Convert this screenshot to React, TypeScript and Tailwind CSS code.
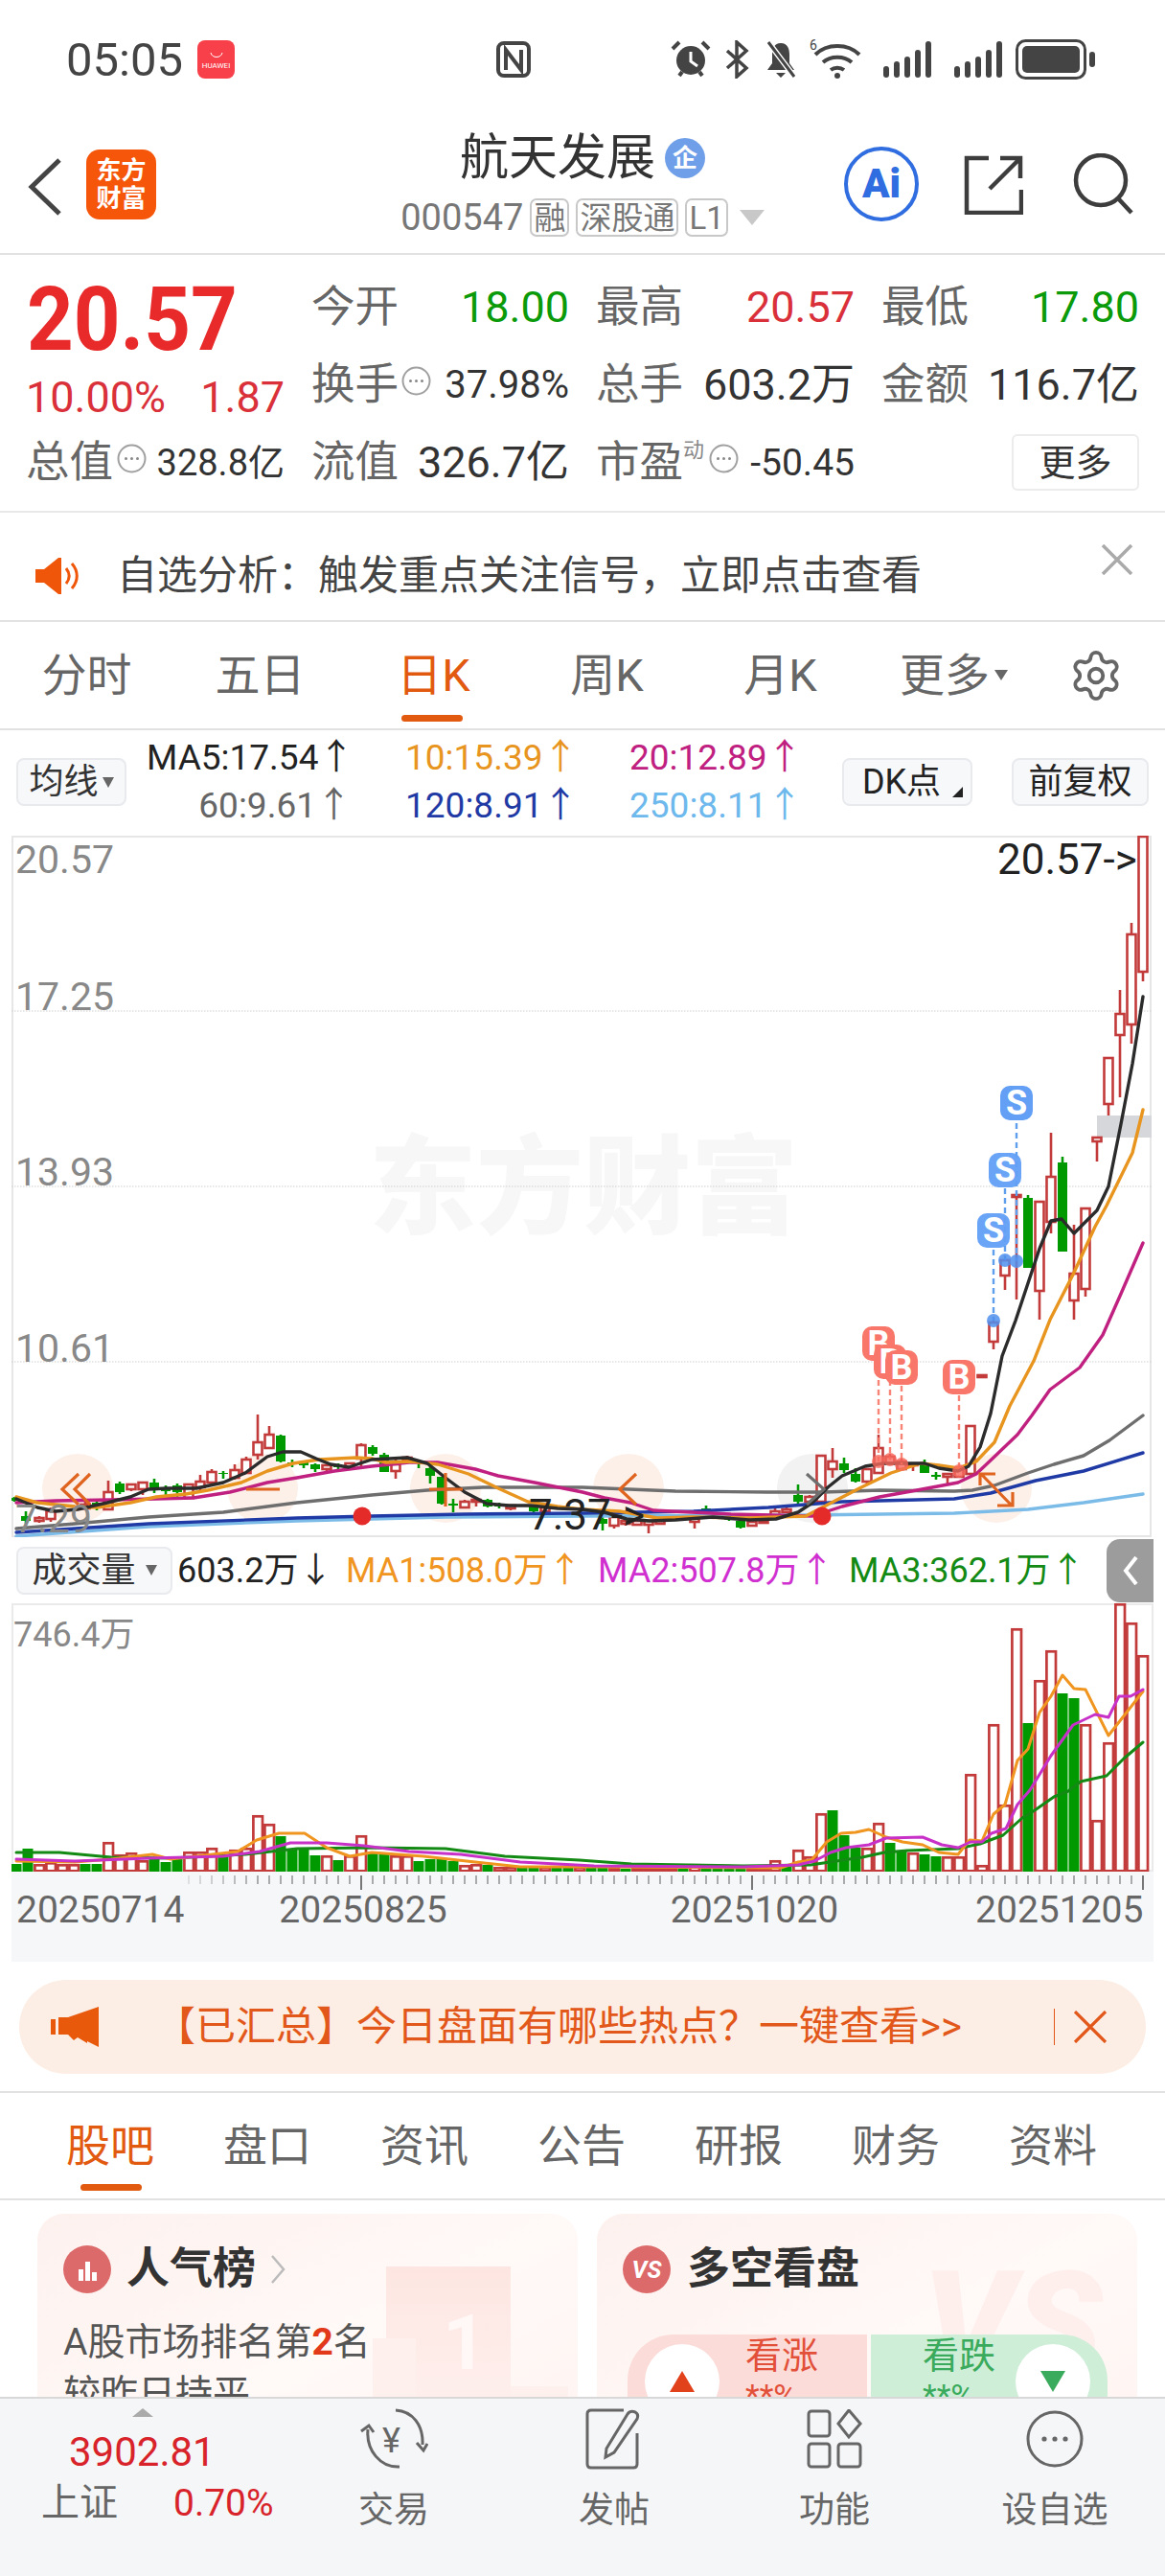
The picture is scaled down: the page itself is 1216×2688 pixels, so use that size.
import React from "react";
import { Settings } from "lucide-react";

type C = [number, number, number, number, number, string];
const candles: C[] = [
  [15,1562,1563,1566,1567,"g"],[27,1577,1582,1587,1590,"g"],[41,1582,1584,1587,1589,"r"],[53,1573,1577,1585,1588,"r"],
  [89,1565,1570,1574,1576,"r"],[101,1566,1568,1574,1576,"g"],[113,1545,1557,1575,1576,"r"],[125,1546,1548,1557,1559,"g"],
  [137,1548,1549,1554,1556,"r"],[149,1546,1547,1554,1560,"r"],[161,1543,1547,1554,1558,"g"],[173,1550,1554,1556,1560,"g"],
  [185,1548,1550,1557,1563,"g"],[197,1549,1549,1563,1563,"r"],[209,1539,1546,1552,1555,"r"],[221,1533,1536,1547,1548,"r"],
  [233,1535,1537,1538,1543,"g"],[245,1528,1534,1542,1544,"r"],[257,1520,1523,1537,1538,"r"],[269,1476,1505,1518,1523,"r"],
  [281,1488,1497,1511,1512,"r"],[293,1497,1498,1525,1526,"g"],[305,1523,1526,1528,1531,"g"],[317,1525,1526,1529,1532,"g"],
  [329,1527,1528,1533,1536,"g"],[341,1528,1529,1533,1536,"r"],[353,1527,1529,1531,1533,"g"],[365,1527,1527,1531,1534,"r"],
  [377,1506,1508,1522,1531,"r"],[389,1508,1510,1517,1519,"g"],[401,1516,1518,1536,1536,"g"],[413,1522,1528,1535,1543,"r"],
  [425,1519,1521,1524,1526,"r"],[437,1524,1525,1527,1532,"g"],[449,1530,1532,1540,1548,"g"],[461,1541,1541,1569,1570,"g"],
  [473,1564,1569,1571,1578,"g"],[485,1565,1567,1573,1574,"r"],[497,1563,1565,1567,1572,"r"],[509,1564,1565,1572,1573,"g"],
  [521,1568,1570,1572,1574,"g"],[533,1570,1571,1574,1576,"r"],[557,1571,1572,1577,1578,"g"],[569,1572,1573,1577,1579,"r"],
  [629,1583,1585,1590,1597,"g"],[641,1582,1583,1592,1595,"r"],[653,1585,1587,1590,1592,"r"],[665,1585,1587,1591,1592,"r"],
  [677,1586,1587,1591,1600,"r"],[689,1585,1587,1590,1591,"r"],[725,1582,1583,1588,1595,"r"],[737,1571,1574,1577,1579,"g"],
  [761,1580,1582,1586,1587,"g"],[773,1585,1587,1594,1595,"g"],[785,1586,1588,1592,1592,"r"],[797,1586,1587,1589,1590,"r"],
  [809,1574,1577,1583,1584,"r"],[821,1573,1575,1578,1579,"r"],[833,1549,1560,1567,1570,"g"],[845,1560,1562,1567,1568,"r"],
  [857,1519,1519,1567,1567,"r"],[869,1511,1525,1533,1542,"r"],[881,1521,1527,1534,1537,"g"],[893,1532,1538,1546,1547,"g"],
  [905,1533,1533,1546,1548,"r"],[917,1497,1511,1537,1538,"r"],[929,1517,1520,1527,1528,"r"],[941,1522,1525,1533,1534,"r"],
  [953,1526,1528,1529,1535,"r"],[965,1523,1529,1537,1537,"g"],[977,1536,1539,1541,1544,"g"],[989,1537,1538,1541,1548,"r"],
  [1001,1532,1533,1541,1541,"r"],[1013,1488,1488,1538,1539,"r"],[1025,1435,1435,1437,1437,"r"],[1037,1378,1380,1400,1408,"r"],
  [1049,1315,1315,1331,1346,"r"],[1061,1247,1247,1249,1356,"r"],[1073,1247,1250,1323,1323,"g"],[1085,1254,1254,1347,1377,"r"],
  [1097,1182,1228,1275,1287,"r"],[1109,1207,1213,1306,1306,"g"],[1121,1278,1329,1357,1377,"r"],[1133,1261,1261,1345,1353,"r"],
  [1145,1187,1187,1191,1212,"r"],[1157,1104,1104,1152,1164,"r"],[1169,1033,1058,1080,1145,"r"],[1181,963,975,1069,1089,"r"],
  [1193,873,873,1014,1024,"r"],
];

const ma5 = "17,1564 39,1573 58,1577 81,1575 112,1568 136,1562 155,1554 174,1553 205,1553 233,1547 256,1537 279,1520 295,1515 314,1515 330,1522 345,1528 364,1531 388,1523 407,1522 425,1521 446,1527 465,1542 485,1557 508,1569 531,1571 554,1571 582,1574 608,1575 631,1578 654,1585 678,1587 705,1586 744,1583 782,1586 810,1585 833,1578 848,1568 864,1552 879,1540 903,1530 922,1527 949,1527 965,1527 980,1532 1000,1535 1011,1530 1023,1510 1034,1475 1046,1415 1060,1378 1085,1303 1097,1274 1108,1272 1121,1287 1145,1263 1157,1238 1170,1173 1182,1110 1193,1040";
const ma10 = "17,1562 39,1568 78,1572 101,1573 136,1568 163,1562 194,1559 217,1555 252,1547 279,1535 306,1527 333,1523 372,1521 388,1522 403,1526 430,1525 457,1528 489,1538 520,1553 551,1567 582,1572 608,1575 647,1577 686,1584 724,1583 782,1584 841,1582 864,1570 899,1552 930,1537 961,1527 980,1529 1000,1532 1019,1525 1038,1505 1054,1467 1079,1420 1096,1377 1120,1330 1143,1280 1155,1258 1182,1203 1193,1158";
const ma20 = "17,1568 58,1566 116,1565 163,1564 202,1563 240,1557 279,1547 310,1542 349,1535 388,1530 427,1526 457,1526 496,1533 520,1540 558,1547 608,1557 631,1563 658,1568 682,1576 701,1577 763,1580 848,1582 879,1572 918,1562 957,1555 1000,1547 1019,1538 1038,1520 1062,1497 1077,1477 1096,1450 1127,1427 1151,1393 1170,1350 1193,1297";
const ma60 = "17,1595 78,1590 155,1583 233,1578 310,1568 388,1560 446,1555 504,1552 608,1552 705,1556 802,1557 860,1557 918,1555 996,1556 1015,1555 1038,1550 1073,1537 1100,1528 1131,1519 1158,1503 1193,1477";
const ma120 = "17,1599 155,1590 310,1584 388,1582 485,1580 608,1579 724,1577 802,1573 879,1567 996,1564 1034,1558 1081,1545 1131,1535 1193,1516";
const ma250 = "17,1603 155,1593 310,1587 465,1583 608,1582 841,1581 996,1579 1073,1575 1131,1568 1193,1559";

const vol: [number, string][] = [
  [8,"g"],[24,"g"],[8,"r"],[10,"r"],[8,"r"],[8,"r"],[8,"g"],[8,"g"],[31,"r"],[18,"r"],[20,"r"],[12,"r"],[15,"g"],[10,"g"],[15,"g"],[21,"r"],[21,"r"],[25,"r"],[17,"g"],[23,"r"],
  [25,"r"],[59,"r"],[50,"r"],[37,"g"],[23,"g"],[24,"g"],[17,"g"],[17,"r"],[12,"g"],[17,"r"],[38,"r"],[20,"g"],[20,"g"],[17,"r"],[17,"r"],[11,"g"],[13,"g"],[13,"g"],[11,"g"],[7,"r"],
  [8,"r"],[7,"g"],[5,"r"],[5,"r"],[5,"g"],[5,"g"],[5,"r"],[4,"g"],[5,"g"],[5,"r"],[5,"g"],[4,"g"],[4,"r"],[3,"g"],[4,"r"],[4,"r"],[4,"r"],[4,"r"],[3,"g"],[8,"r"],
  [7,"g"],[7,"g"],[7,"g"],[5,"g"],[3,"r"],[3,"r"],[12,"r"],[5,"g"],[23,"r"],[16,"r"],[61,"r"],[64,"g"],[38,"g"],[25,"g"],[25,"r"],[51,"r"],[30,"g"],[21,"g"],[20,"r"],[18,"g"],
  [16,"g"],[16,"r"],[16,"r"],[102,"r"],[7,"r"],[154,"r"],[70,"r"],[254,"r"],[155,"g"],[200,"r"],[231,"r"],[186,"g"],[181,"g"],[154,"r"],[54,"r"],[135,"r"],[280,"r"],[260,"r"],[226,"r"],
];
const vm1 = "17,1942 78,1943 116,1940 159,1935 178,1940 248,1932 268,1920 291,1913 318,1913 341,1928 365,1937 388,1933 442,1937 496,1943 543,1948 620,1948 815,1949 833,1943 847,1941 863,1922 878,1913 893,1912 907,1909 925,1917 942,1922 963,1925 980,1933 1000,1935 1012,1920 1025,1921 1037,1893 1049,1883 1062,1837 1073,1825 1085,1787 1097,1770 1109,1748 1121,1762 1133,1763 1157,1811 1193,1765";
const vm2 = "17,1940 78,1942 155,1939 233,1937 271,1932 303,1923 341,1923 380,1926 427,1932 481,1935 543,1943 620,1947 776,1948 833,1946 850,1942 867,1933 883,1928 907,1925 925,1918 963,1917 983,1925 1000,1928 1013,1922 1025,1922 1035,1913 1050,1908 1062,1883 1075,1868 1097,1832 1120,1800 1143,1789 1157,1792 1168,1770 1180,1770 1193,1763";
const vm3 = "17,1933 62,1933 116,1938 178,1939 256,1935 310,1929 388,1928 465,1929 527,1937 605,1941 659,1945 776,1947 846,1946 900,1938 923,1933 947,1931 1000,1929 1023,1924 1047,1915 1067,1897 1080,1889 1100,1875 1115,1869 1128,1859 1155,1853 1173,1835 1193,1818";

const ticks = Array.from({ length: 84 }, (_, i) => 17 + 12 * (i + 15));

function Dots() {
  return (
    <svg width="31" height="31" viewBox="0 0 31 31" className="block shrink-0">
      <circle cx="15.5" cy="15.5" r="14" fill="none" stroke="#a0a0a0" strokeWidth="2" />
      <circle cx="9.5" cy="15.5" r="1.5" fill="#888" />
      <circle cx="15.5" cy="15.5" r="1.5" fill="#888" />
      <circle cx="21.5" cy="15.5" r="1.5" fill="#888" />
    </svg>
  );
}

function Cell({ label, value, color }: { label: string; value: string; color: string }) {
  return (
    <div className="flex items-center justify-between">
      <span className="text-[45.5px] leading-[50px] text-[#666]">{label}</span>
      <span className={`text-[45px] leading-[50px] ${color}`}>{value}</span>
    </div>
  );
}

function Badge({ children, cls }: { children: React.ReactNode; cls: string }) {
  return (
    <span className={`absolute flex h-[36px] w-[34px] items-center justify-center rounded-[10px] text-[36px] leading-none font-bold text-white ${cls}`}>
      {children}
    </span>
  );
}

const F = "#df6420";

function MainChart() {
  return (
    <div className="relative ml-3 h-[732px] w-[1190px] outline-2 -outline-offset-2 outline-[#e6e6e6]">
      <span className="absolute left-[373px] top-[304px] text-[112px] leading-[130px] font-black whitespace-nowrap text-[#f7f7f7]">东方财富</span>
      <svg viewBox="12 872 1190 732" className="absolute inset-0 h-full w-full">
        {[81, 274, 465, 656, 1040].map((x) => (
          <ellipse key={x} cx={x} cy={1553} rx={37} ry={36} fill="#fdf0e9" />
        ))}
        <ellipse cx={848} cy={1553} rx={37} ry={36} fill="#f2f2f2" />
        {[1055, 1238, 1421].map((y) => (
          <line key={y} x1={12} x2={1202} y1={y} y2={y} stroke="#cfcfcf" strokeWidth={1} strokeDasharray="1.5 1.5" />
        ))}
        <rect x={1145} y={1164} width={57} height={23} fill="#d5d7da" />
        {candles.map(([x, hi, top, bot, lo, c]) =>
          c === "r" ? (
            <g key={x} stroke="#c23a3a" strokeWidth={2.6}>
              <line x1={x} x2={x} y1={hi} y2={top} />
              <line x1={x} x2={x} y1={bot} y2={lo} />
              <rect x={x - 4.5} y={top} width={9} height={Math.max(bot - top, 1)} fill="#fff" />
            </g>
          ) : (
            <g key={x} stroke="#009a00">
              <line x1={x} x2={x} y1={hi} y2={lo} strokeWidth={2.6} />
              <rect x={x - 5} y={top} width={10} height={Math.max(bot - top, 1)} fill="#009a00" strokeWidth={0} />
            </g>
          ),
        )}
        <g fill="none" strokeWidth={3.4} strokeLinejoin="round" strokeLinecap="round">
          <polyline points={ma250} stroke="#7bbbe8" />
          <polyline points={ma120} stroke="#1f3aa5" />
          <polyline points={ma60} stroke="#6e6e6e" />
          <polyline points={ma20} stroke="#c0207f" />
          <polyline points={ma10} stroke="#e8951f" />
          <polyline points={ma5} stroke="#2b2b2b" />
        </g>
        <g fill="none" stroke={F} strokeWidth={3.2}>
          <path d="M94 1538 L78 1554 L94 1570 M82 1538 L65 1554 L82 1570" />
          <path d="M257 1554 H292" />
          <path d="M448 1554 H483 M465 1537 V1572" />
          <path d="M664 1538 L647 1554 L664 1570" />
          <path d="M1023 1550 V1538 H1039 M1024 1538 L1056 1571 M1041 1571 H1057 V1557" />
        </g>
        <path d="M842 1538 L860 1554 L842 1570" fill="none" stroke="#6e6e6e" strokeWidth={3.2} />
        <circle cx={378} cy={1582} r={9.5} fill="#e52a2a" />
        <circle cx={858} cy={1582} r={9.5} fill="#e52a2a" />
        <g stroke="#f8776a" strokeWidth={2.4} strokeDasharray="6 4" opacity={0.9}>
          <line x1={917} x2={917} y1={1420} y2={1525} />
          <line x1={929} x2={929} y1={1440} y2={1523} />
          <line x1={941} x2={941} y1={1446} y2={1528} />
          <line x1={1001} x2={1001} y1={1456} y2={1535} />
        </g>
        <g fill="#f8695c" opacity={0.8}>
          <circle cx={917} cy={1525} r={7} />
          <circle cx={929} cy={1523} r={7} />
          <circle cx={941} cy={1528} r={7} />
          <circle cx={1001} cy={1535} r={7} />
        </g>
        <g stroke="#5f9eec" strokeWidth={2.4} strokeDasharray="6 4">
          <line x1={1061} x2={1061} y1={1172} y2={1316} />
          <line x1={1049} x2={1049} y1={1240} y2={1315} />
          <line x1={1037} x2={1037} y1={1304} y2={1378} />
        </g>
        <g fill="#4f90ee" opacity={0.85}>
          <circle cx={1049} cy={1315} r={7} />
          <circle cx={1061} cy={1316} r={7} />
          <circle cx={1037} cy={1378} r={7} />
        </g>
      </svg>
      <span className="absolute left-[4px] top-[0px] text-[41px] leading-[50px] text-[#888]">20.57</span>
      <span className="absolute left-[4px] top-[143px] text-[41px] leading-[50px] text-[#888]">17.25</span>
      <span className="absolute left-[4px] top-[326px] text-[41px] leading-[50px] text-[#888]">13.93</span>
      <span className="absolute left-[4px] top-[510px] text-[41px] leading-[50px] text-[#888]">10.61</span>
      <span className="absolute left-[4px] top-[688px] text-[41px] leading-[50px] text-[#888]">7.29</span>
      <span className="absolute left-[1029px] top-[0px] text-[44px] leading-[50px] whitespace-nowrap text-[#222]">20.57-&gt;</span>
      <span className="absolute left-[540px] top-[684px] text-[44px] leading-[50px] whitespace-nowrap text-[#222]">7.37-&gt;</span>
      <Badge cls="left-[1032px] top-[261px] bg-[#629ff5]">S</Badge>
      <Badge cls="left-[1020px] top-[331px] bg-[#629ff5]/95">S</Badge>
      <Badge cls="left-[1008px] top-[394px] bg-[#629ff5]/95">S</Badge>
      <Badge cls="left-[888px] top-[512px] bg-[#f8776a]">B</Badge>
      <Badge cls="left-[900px] top-[531px] bg-[#f8776a]">B</Badge>
      <Badge cls="left-[912px] top-[537px] bg-[#f8776a]">B</Badge>
      <Badge cls="left-[972px] top-[547px] bg-[#f8776a]">B</Badge>
    </div>
  );
}

function VolChart() {
  return (
    <div className="relative ml-3 h-[280px] w-[1192px] outline-2 -outline-offset-2 outline-[#eaeaea]">
      <svg viewBox="12 1673 1192 280" className="absolute inset-0 h-full w-full">
        {vol.map(([h, c], i) => {
          const x = 17 + 12 * i;
          return c === "r" ? (
            <rect key={i} x={x - 4.6} y={1953 - h + 1.3} width={9.6} height={h - 2} fill="#fff" stroke="#c23a3a" strokeWidth={2.7} />
          ) : (
            <rect key={i} x={x - 5.5} y={1953 - h} width={11} height={h} fill="#009a00" />
          );
        })}
        <g fill="none" strokeWidth={3} strokeLinejoin="round" strokeLinecap="round">
          <polyline points={vm3} stroke="#138a13" />
          <polyline points={vm1} stroke="#f0951f" />
          <polyline points={vm2} stroke="#c831c8" />
        </g>
      </svg>
      <span className="absolute left-[2px] top-[15px] text-[36px] leading-[36px] text-[#888]">746.4万</span>
    </div>
  );
}

function Tag({ children }: { children: React.ReactNode }) {
  return (
    <span className="flex h-[40px] items-center rounded-[7px] border-2 border-[#c8c8c8] px-[2px] text-[33px] leading-none text-[#777]">
      {children}
    </span>
  );
}

function FooterItem({ icon, label }: { icon: React.ReactNode; label: string }) {
  return (
    <div className="flex flex-col items-center">
      <div className="flex h-[64px] items-center justify-center">{icon}</div>
      <span className="mt-[20px] text-[37px] leading-[46px] text-[#666]">{label}</span>
    </div>
  );
}

export default function App() {
  return (
    <div className="flex h-[2688px] w-[1216px] flex-col overflow-hidden bg-white font-[family-name:Roboto,'Noto_Sans_CJK_SC',sans-serif]">
      {/* status bar */}
      <div className="flex h-[124px] shrink-0 items-center">
        <span className="ml-[69px] text-[49px] leading-none text-[#444]">05:05</span>
        <span className="ml-[15px] flex h-[40px] w-[39px] flex-col items-center justify-end rounded-[8px] bg-[#f8404a] pb-[9px] text-[8px] leading-none text-white">
          <svg width="14" height="7" viewBox="0 0 14 7" className="mb-[4px]"><path d="M1 1c1 6 11 6 12 0" fill="none" stroke="#fff" strokeWidth="1" /></svg>
          HUAWEI
        </span>
        <svg width="36" height="38" viewBox="0 0 36 38" className="ml-[273px]" fill="none" stroke="#444" strokeWidth="4">
          <rect x="2" y="2" width="32" height="34" rx="6" />
          <path d="M10 30V9l16 21V9" />
        </svg>
        <svg width="42" height="40" viewBox="0 0 42 40" className="ml-[146px]">
          <circle cx="21" cy="21" r="15" fill="#444" />
          <path d="M21 12v10l7 5" fill="none" stroke="#fff" strokeWidth="3" />
          <path d="M2 9l7-7M40 9l-7-7M9 37l3-4M33 37l-3-4" stroke="#444" strokeWidth="4" />
        </svg>
        <svg width="27" height="40" viewBox="0 0 27 40" className="ml-[14px]" fill="none" stroke="#444" strokeWidth="3.5">
          <path d="M3 11l20 18-10 9V2l10 9L3 29" />
        </svg>
        <svg width="32" height="40" viewBox="0 0 32 40" className="ml-[16px]">
          <path d="M16 3c7 0 9 6 9 12v9l5 7H2l5-7v-9c0-6 2-12 9-12zM11 34h10l-5 5z" fill="#444" />
          <path d="M3 2l27 36" stroke="#fff" strokeWidth="6" />
          <path d="M3 2l27 36" stroke="#444" strokeWidth="3" />
        </svg>
        <svg width="56" height="42" viewBox="0 0 56 42" className="ml-[14px]" fill="none" stroke="#444" strokeWidth="4">
          <path d="M6 16c12-12 34-12 46 0M14 24c8-7 22-7 30 0M22 32c4-3 10-3 14 0" />
          <circle cx="29" cy="38" r="3" fill="#444" stroke="none" />
          <text x="0" y="11" fontSize="14" fill="#444" stroke="none">6</text>
        </svg>
        <svg width="50" height="38" viewBox="0 0 50 38" className="ml-[21px]" fill="#444">
          <rect x="0" y="26" width="6" height="12" rx="3" /><rect x="11" y="21" width="6" height="17" rx="3" /><rect x="22" y="16" width="6" height="22" rx="3" /><rect x="33" y="9" width="6" height="29" rx="3" /><rect x="44" y="0" width="6" height="38" rx="3" />
        </svg>
        <svg width="50" height="38" viewBox="0 0 50 38" className="ml-[24px]" fill="#444">
          <rect x="0" y="26" width="6" height="12" rx="3" /><rect x="11" y="21" width="6" height="17" rx="3" /><rect x="22" y="16" width="6" height="22" rx="3" /><rect x="33" y="9" width="6" height="29" rx="3" /><rect x="44" y="0" width="6" height="38" rx="3" />
        </svg>
        <svg width="84" height="42" viewBox="0 0 84 42" className="ml-[14px]">
          <rect x="1.5" y="1.5" width="71" height="39" rx="9" fill="none" stroke="#444" strokeWidth="3" />
          <rect x="7" y="7" width="60" height="28" rx="5" fill="#444" />
          <rect x="77" y="13" width="6" height="16" rx="3" fill="#444" />
        </svg>
      </div>

      {/* header */}
      <div className="grid h-[142px] shrink-0 grid-cols-[1fr_auto_1fr] border-b-2 border-[#e2e2e2]">
        <div className="flex items-start pt-[32px]">
          <svg width="36" height="60" viewBox="0 0 36 60" className="ml-[29px] mt-[9px]" fill="none" stroke="#444" strokeWidth="5">
            <path d="M33 2L4 30l29 28" />
          </svg>
          <div className="ml-[25px] flex h-[73px] w-[73px] flex-col items-center justify-center rounded-[14px] bg-[#f5560a] text-[26px] leading-[29px] font-bold text-white">
            <span>东方</span>
            <span>财富</span>
          </div>
        </div>
        <div className="flex flex-col items-center pt-[15px]">
          <div className="flex items-center gap-[10px]">
            <span className="text-[51px] leading-[52px] text-[#333]">航天发展</span>
            <span className="flex h-[42px] w-[42px] items-center justify-center rounded-full bg-[#6f9fe8] text-[26px] leading-none font-bold text-white">企</span>
          </div>
          <div className="mt-[16px] flex items-center gap-[7px]">
            <span className="text-[38px] leading-[40px] text-[#777]">000547</span>
            <Tag>融</Tag>
            <Tag>深股通</Tag>
            <Tag>L1</Tag>
            <span className="ml-[5px] h-0 w-0 border-x-[13px] border-t-[16px] border-x-transparent border-t-[#c8c8c8]" />
          </div>
        </div>
        <div className="flex items-start justify-end pr-[32px] pt-[29px]">
          <span className="relative flex h-[78px] w-[78px] items-center justify-center rounded-full border-4 border-[#2f6de0] text-[42px] leading-none font-black text-[#2f6de0]">Ai</span>
          <svg width="62" height="62" viewBox="0 0 62 62" className="ml-[47px] mt-[9px]" fill="none" stroke="#3d3d3d" strokeWidth="4.5">
            <path d="M26 3H3v57h57V36" />
            <path d="M27 35L59 3M38 3h21v21" />
          </svg>
          <svg width="64" height="64" viewBox="0 0 64 64" className="ml-[52px] mt-[7px]" fill="none" stroke="#3d3d3d" strokeWidth="4.5">
            <circle cx="29" cy="28" r="26" />
            <path d="M47 47l14 15" />
          </svg>
        </div>
      </div>

      {/* quote */}
      <div className="grid h-[269px] shrink-0 grid-cols-[270px_269px_270px_269px] grid-rows-[81px_81px_81px] gap-x-[28px] border-b-2 border-[#e8e8e8] pl-[27px] pt-[14px]">
        <div className="row-span-2 flex flex-col">
          <span className="mt-[8px] ml-[1px] origin-center scale-y-[1.08] text-[85px] leading-[92px] font-bold text-[#e82a2a]">20.57</span>
          <div className="mt-[15px] flex items-center justify-between">
            <span className="text-[45px] leading-[40px] text-[#d9303a]">10.00%</span>
            <span className="text-[45px] leading-[40px] text-[#d9303a]">1.87</span>
          </div>
        </div>
        <Cell label="今开" value="18.00" color="text-[#0a9a0a]" />
        <Cell label="最高" value="20.57" color="text-[#d9303a]" />
        <Cell label="最低" value="17.80" color="text-[#0a9a0a]" />
        <div className="flex items-center">
          <span className="text-[45.5px] leading-[50px] text-[#666]">换手</span>
          <span className="mb-[8px] ml-[3px]"><Dots /></span>
          <span className="ml-auto text-[40px] leading-[50px] text-[#333]">37.98%</span>
        </div>
        <Cell label="总手" value="603.2万" color="text-[#333]" />
        <Cell label="金额" value="116.7亿" color="text-[#333]" />
        <div className="flex items-center">
          <span className="text-[45.5px] leading-[50px] text-[#666]">总值</span>
          <span className="mb-[8px] ml-[4px]"><Dots /></span>
          <span className="ml-auto text-[38px] leading-[50px] text-[#333]">328.8亿</span>
        </div>
        <Cell label="流值" value="326.7亿" color="text-[#333]" />
        <div className="flex items-center">
          <span className="text-[45.5px] leading-[50px] text-[#666]">市盈</span>
          <span className="mb-[26px] text-[22px] leading-none text-[#888]">动</span>
          <span className="ml-[5px] mb-[8px]"><Dots /></span>
          <span className="ml-auto text-[39px] leading-[50px] text-[#333]">-50.45</span>
        </div>
        <div className="flex items-center justify-end">
          <span className="flex h-[59px] w-[133px] items-center justify-center rounded-[6px] border-2 border-[#ececec] text-[38px] leading-none text-[#333]">更多</span>
        </div>
      </div>

      {/* alert */}
      <div className="flex h-[114px] shrink-0 items-center border-b-2 border-[#e2e2e2] pt-[19px]">
        <svg width="50" height="38" viewBox="0 0 50 38" className="ml-[37px]">
          <path d="M0 12h9L24 0h3v38h-3L9 26H0z" fill="#f0560a" />
          <path d="M32 11c4 5 4 11 0 16M38 6c7 8 7 18 0 26" fill="none" stroke="#f0560a" strokeWidth="3" />
        </svg>
        <span className="ml-[35px] text-[42px] leading-[50px] whitespace-nowrap text-[#444]">自选分析：触发重点关注信号，立即点击查看</span>
        <svg width="34" height="32" viewBox="0 0 34 32" className="ml-auto mr-[33px] mb-[34px]" fill="none" stroke="#aaa" strokeWidth="3.5">
          <path d="M2 1l30 30M32 1L2 31" />
        </svg>
      </div>

      {/* period tabs */}
      <div className="grid h-[113px] shrink-0 grid-cols-[181px_181px_181px_181px_181px_181px_1fr] items-center border-b-2 border-[#e2e2e2] text-[47px] leading-[50px] text-[#666]">
        <span className="text-center">分时</span>
        <span className="text-center">五日</span>
        <span className="relative text-center text-[#e25a10]">
          日K
          <span className="absolute bottom-[-23px] left-[57px] h-[7px] w-[64px] rounded-full bg-[#e25a10]" />
        </span>
        <span className="text-center">周K</span>
        <span className="text-center">月K</span>
        <span className="flex items-center justify-center">
          更多
          <span className="ml-[5px] h-0 w-0 border-x-[7px] border-t-[11px] border-x-transparent border-t-[#666]" />
        </span>
        <div className="flex justify-center pr-[14px]">
          <Settings size={58} strokeWidth={1.6} color="#666" />
        </div>
      </div>

      {/* MA row */}
      <div className="flex h-[110px] shrink-0 items-center pb-[2px]">
        <span className="ml-[17px] flex h-[50px] w-[115px] items-center justify-center rounded-[8px] border-2 border-[#e8eaee] bg-[#f7f8fa] text-[36px] leading-none text-[#333]">
          均线
          <span className="ml-[4px] h-0 w-0 border-x-[6px] border-t-[11px] border-x-transparent border-t-[#666]" />
        </span>
        <div className="ml-[21px] grid grid-cols-[214px_228px_234px] grid-rows-[50px_50px] items-center text-[37px] leading-[44px] whitespace-nowrap">
          <span className="text-right text-[#222]">MA5:17.54↑</span>
          <span className="pl-[56px] text-[#e8951f]">10:15.39↑</span>
          <span className="pl-[62px] text-[#c0207f]">20:12.89↑</span>
          <span className="text-right text-[#666]">60:9.61↑</span>
          <span className="pl-[56px] text-[#1f3aa5]">120:8.91↑</span>
          <span className="pl-[62px] text-[#6db8ec]">250:8.11↑</span>
        </div>
        <span className="relative ml-[50px] flex h-[50px] w-[136px] items-center justify-center rounded-[8px] border-2 border-[#e8eaee] bg-[#f7f8fa] pr-[12px] text-[36px] leading-none text-[#222]">
          DK点
          <span className="absolute bottom-[7px] right-[8px] h-0 w-0 border-b-[11px] border-l-[11px] border-b-[#222] border-l-transparent" />
        </span>
        <span className="ml-[41px] flex h-[50px] w-[143px] items-center justify-center rounded-[8px] border-2 border-[#e8eaee] bg-[#f7f8fa] text-[36px] leading-none text-[#222]">前复权</span>
      </div>

      <div className="h-[732px] shrink-0"><MainChart /></div>

      {/* volume header */}
      <div className="relative flex h-[69px] shrink-0 items-center whitespace-nowrap pl-[17px] text-[36px] leading-[44px]">
        <span className="flex h-[50px] w-[163px] items-center justify-center rounded-[8px] border-2 border-[#e8eaee] bg-[#f7f8fa] text-[#333]">
          成交量
          <span className="ml-[10px] h-0 w-0 border-x-[6px] border-t-[11px] border-x-transparent border-t-[#666]" />
        </span>
        <span className="ml-[5px] w-[176px] text-[#222]">603.2万↓</span>
        <span className="w-[263px] text-[#f0951f]">MA1:508.0万↑</span>
        <span className="w-[262px] text-[#d030d0]">MA2:507.8万↑</span>
        <span className="text-[#138a13]">MA3:362.1万↑</span>
        <span className="absolute right-[12px] top-[2px] flex h-[66px] w-[49px] items-center justify-center rounded-l-[14px] bg-[#9c9c9c]">
          <svg width="16" height="30" viewBox="0 0 16 30" fill="none" stroke="#fff" strokeWidth="4"><path d="M14 1L3 15l11 14" /></svg>
        </span>
      </div>

      <div className="h-[280px] shrink-0"><VolChart /></div>

      {/* dates */}
      <div className="ml-3 h-[94px] w-[1192px] shrink-0 bg-[#f6f7f9]">
        <svg viewBox="12 1953 1192 20" className="block h-[20px] w-[1192px]">
          {ticks.map((x) => {
            const major = x === 377 || x === 785 || x === 1193;
            const opacity = x < 270 ? 0.3 + ((x - 197) / 73) * 0.7 : 1;
            return (
              <line key={x} x1={x} x2={x} y1={1957} y2={major ? 1972 : 1966} stroke="#777" strokeWidth={major ? 2 : 1.2} opacity={opacity} />
            );
          })}
        </svg>
        <div className="flex pl-[5px] text-[39px] leading-[40px] text-[#666]">
          <span>20250714</span>
          <span className="ml-[99px]">20250825</span>
          <span className="ml-[233px]">20251020</span>
          <span className="ml-[143px]">20251205</span>
        </div>
      </div>

      {/* banner */}
      <div className="mx-[20px] mt-[19px] mb-[18px] flex h-[98px] shrink-0 items-center rounded-[49px] bg-[#fdeee5]">
        <svg width="50" height="42" viewBox="0 0 50 42" className="ml-[33px]" fill="#e8590c">
          <rect x="0" y="13" width="5" height="16" />
          <path d="M8 11h10L50 0v42L38 36v2l-10-6-4 3-6-6H8z" />
        </svg>
        <span className="ml-[59px] text-[42px] leading-[50px] whitespace-nowrap text-[#e2581a]">【已汇总】今日盘面有哪些热点？一键查看&gt;&gt;</span>
        <span className="ml-auto h-[38px] w-[1px] bg-[#e2581a]" />
        <svg width="36" height="34" viewBox="0 0 36 34" className="ml-[19px] mr-[40px]" fill="none" stroke="#e2581a" strokeWidth="3.2">
          <path d="M2 1l32 32M34 1L2 33" />
        </svg>
      </div>

      {/* content tabs */}
      <div className="grid h-[114px] shrink-0 grid-cols-[164px_164px_164px_164px_164px_164px_164px] items-center border-y-2 border-[#e2e2e2] pl-[33px] text-[46px] leading-[50px] text-[#666]">
        <span className="relative text-center text-[#e25a10]">
          股吧
          <span className="absolute bottom-[-22px] left-[51px] h-[7px] w-[64px] rounded-full bg-[#e25a10]" />
        </span>
        <span className="text-center">盘口</span>
        <span className="text-center">资讯</span>
        <span className="text-center">公告</span>
        <span className="text-center">研报</span>
        <span className="text-center">财务</span>
        <span className="text-center">资料</span>
      </div>

      {/* cards */}
      <div className="grid min-h-0 flex-1 grid-cols-[564px_564px] gap-x-[20px] overflow-hidden pl-[39px] pt-[14px]">
        <div className="relative h-[300px] overflow-hidden rounded-t-[28px] bg-linear-to-br from-[#fdf1ee] via-[#fff9f7] to-[#fff4f1] pl-[27px] pt-[33px]">
          <div className="absolute bottom-0 right-[70px] top-[55px] w-[130px] bg-linear-to-b from-[#fde6e2] to-[#fff6f4]" />
          <div className="absolute bottom-0 right-[10px] top-[180px] w-[60px] bg-[#fef0ec]" />
          <div className="absolute bottom-0 left-[350px] top-[130px] w-[45px] bg-[#fef0ec]" />
          <span className="absolute right-[95px] top-[95px] text-[80px] leading-none font-bold text-[#fff8f6]">1</span>
          <div className="relative flex items-center">
            <span className="flex h-[50px] w-[50px] items-end justify-center gap-[2px] rounded-full bg-[#dd6a6a] pb-[13px]">
              <span className="h-[12px] w-[5px] bg-white" /><span className="h-[20px] w-[5px] bg-white" /><span className="h-[9px] w-[5px] bg-white" />
            </span>
            <span className="ml-[16px] text-[45px] leading-[50px] font-bold text-[#333]">人气榜</span>
            <svg width="16" height="30" viewBox="0 0 16 30" className="ml-[15px]" fill="none" stroke="#bbb" strokeWidth="2.5"><path d="M2 1l12 14L2 29" /></svg>
          </div>
          <p className="relative mt-[29px] text-[39px] leading-[44px] text-[#555]">
            A股市场排名第<span className="font-bold text-[#e2391b]">2</span>名
          </p>
          <p className="relative mt-[10px] text-[39px] leading-[44px] text-[#555]">较昨日持平</p>
        </div>
        <div className="relative h-[300px] overflow-hidden rounded-t-[28px] bg-linear-to-br from-[#fdf1ee] via-[#fff9f7] to-[#fff4f1] pl-[27px] pt-[33px]">
          <span className="absolute left-[340px] top-[40px] text-[150px] leading-none font-black text-[#feefec] italic">VS</span>
          <div className="relative flex items-center">
            <span className="flex h-[50px] w-[50px] items-center justify-center rounded-full bg-[#dd6a6a] text-[25px] leading-none font-bold text-white italic">VS</span>
            <span className="ml-[17px] text-[45px] leading-[50px] font-bold text-[#333]">多空看盘</span>
          </div>
          <div className="relative mt-[43px] ml-[5px] flex h-[130px] w-[501px] gap-[4px]">
            <div className="flex h-full w-[250px] items-start rounded-l-[48px] bg-[#fcdcd8] pl-[18px] pt-[10px]">
              <span className="flex h-[78px] w-[78px] items-center justify-center rounded-full bg-white">
                <span className="h-0 w-0 border-x-[13px] border-b-[22px] border-x-transparent border-b-[#e2421b]" />
              </span>
              <div className="-mt-[8px] ml-[27px] flex flex-col text-[38px] leading-[40px] text-[#e2503a]">
                <span>看涨</span>
                <span className="mt-[2px] text-[34px]">**%</span>
              </div>
            </div>
            <div className="flex h-full w-[247px] items-start justify-end rounded-r-[48px] bg-[#cfeed8] pr-[18px] pt-[10px]">
              <div className="-mt-[8px] mr-[21px] flex flex-col text-[38px] leading-[40px] text-[#3aaa5c]">
                <span>看跌</span>
                <span className="mt-[2px] text-[34px]">**%</span>
              </div>
              <span className="flex h-[78px] w-[78px] items-center justify-center rounded-full bg-white">
                <span className="h-0 w-0 border-x-[13px] border-t-[22px] border-x-transparent border-t-[#3aaa5c]" />
              </span>
            </div>
          </div>
        </div>
      </div>

      {/* footer */}
      <div className="grid h-[187px] shrink-0 grid-cols-[296px_230px_230px_230px_230px] border-t-2 border-[#d8d8d8] bg-[#f5f6f8] pt-[10px]">
        <div className="flex flex-col">
          <span className="ml-[138px] h-0 w-0 border-x-[11px] border-b-[9px] border-x-transparent border-b-[#aaa]" />
          <span className="ml-[72px] mt-[14px] text-[42px] leading-[46px] text-[#d8232a]">3902.81</span>
          <div className="mt-[7px] flex items-center">
            <span className="ml-[43px] text-[40px] leading-[46px] text-[#666]">上证</span>
            <span className="ml-[58px] text-[39px] leading-[46px] text-[#d8232a]">0.70%</span>
          </div>
        </div>
        <FooterItem
          label="交易"
          icon={
            <svg width="72" height="64" viewBox="0 0 72 64" fill="none" stroke="#666" strokeWidth="3">
              <path d="M9 22C7 44 22 62 42 61M38 2c18 1 29 16 28 36" />
              <path d="M2 24l8-6 5 7M60 36l7 8 4-7" />
              <text x="24" y="46" fontSize="36" fill="#666" stroke="none">¥</text>
            </svg>
          }
        />
        <FooterItem
          label="发帖"
          icon={
            <svg width="60" height="64" viewBox="0 0 60 64" fill="none" stroke="#666" strokeWidth="3">
              <path d="M40 2H6Q2 2 2 6v52q0 4 4 4h44q4 0 4-4V26" />
              <path d="M22 42L44 6q3-4 8-2 4 2 2 7L30 46l-9 5z" fill="#f5f6f8" />
            </svg>
          }
        />
        <FooterItem
          label="功能"
          icon={
            <svg width="58" height="62" viewBox="0 0 58 62" fill="none" stroke="#666" strokeWidth="3">
              <rect x="2" y="2" width="22" height="26" rx="3" />
              <rect x="2" y="36" width="22" height="24" rx="3" />
              <rect x="33" y="36" width="23" height="24" rx="3" />
              <path d="M44 1l12 14-12 14-11-14z" />
            </svg>
          }
        />
        <FooterItem
          label="设自选"
          icon={
            <svg width="60" height="60" viewBox="0 0 60 60" fill="none" stroke="#666" strokeWidth="3">
              <circle cx="30" cy="30" r="28" />
              <circle cx="19" cy="30" r="2.6" fill="#666" stroke="none" />
              <circle cx="30" cy="30" r="2.6" fill="#666" stroke="none" />
              <circle cx="41" cy="30" r="2.6" fill="#666" stroke="none" />
            </svg>
          }
        />
      </div>
    </div>
  );
}
